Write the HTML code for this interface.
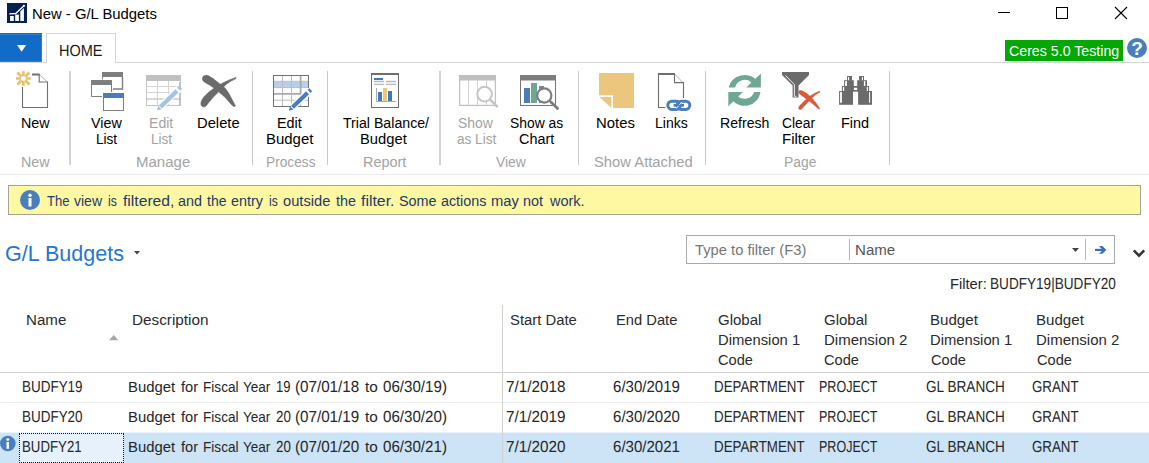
<!DOCTYPE html>
<html>
<head>
<meta charset="utf-8">
<title>New - G/L Budgets</title>
<style>
html,body{margin:0;padding:0;}
body{width:1149px;height:463px;position:relative;overflow:hidden;background:#fff;
  font-family:"Liberation Sans",sans-serif;font-size:14.5px;color:#000;}
.t{position:absolute;white-space:nowrap;line-height:18px;height:18px;transform-origin:0 0;}
.abs{position:absolute;}
.sep{position:absolute;top:71px;width:2px;height:94px;background:#d3d3d3;}
.s1{width:1px;background:#c9c9c9;}
svg{position:absolute;overflow:visible;}
</style>
</head>
<body>

<!-- ===== title bar ===== -->
<svg style="left:7px;top:3px" width="20" height="20" viewBox="0 0 20 20">
  <rect x="0" y="0" width="20" height="20" fill="#05214f"/>
  <rect x="3.1" y="13" width="3.7" height="5" fill="#fff"/>
  <rect x="8.2" y="11.6" width="3.7" height="6.4" fill="#fff"/>
  <path d="M13.3 8.4 L16.9 5 V18 H13.3 Z" fill="#fff"/>
  <path d="M2.3 10.8 L8.8 10.5 L16.9 2.7" stroke="#fff" stroke-width="1.3" fill="none" stroke-linejoin="round"/>
  <circle cx="16.9" cy="2.8" r="1.1" fill="#fff"/>
</svg>

<svg style="left:998px;top:12px" width="12" height="1"><rect width="12" height="1" fill="#000"/></svg>
<svg style="left:1056px;top:7px" width="12" height="12"><rect x="0.5" y="0.5" width="11" height="11" fill="none" stroke="#000" stroke-width="1"/></svg>
<svg style="left:1115px;top:7px" width="12" height="12"><path d="M0 0 L12 12 M12 0 L0 12" stroke="#000" stroke-width="1.1" fill="none"/></svg>

<!-- ===== tab strip ===== -->
<div class="abs" style="left:0;top:62px;width:1149px;height:1px;background:#d6d6d6;"></div>
<div class="abs" style="left:0;top:33px;width:42px;height:29px;background:#126bc6;"></div>
<div class="abs" style="left:-2px;top:34px;width:42px;height:26px;border:1px solid #2f7fd0;"></div>
<svg style="left:16.6px;top:44.7px" width="10" height="7"><path d="M0 0 L9.2 0 L4.6 6.8 Z" fill="#fff"/></svg>
<div class="abs" style="left:46px;top:33px;width:70px;height:30px;background:#fff;border:1px solid #d6d6d6;border-bottom:none;box-sizing:border-box;"></div>

<div class="abs" style="left:1005px;top:40px;width:118px;height:21px;background:#04a804;"></div>
<svg style="left:1127px;top:38px" width="20" height="20" viewBox="0 0 20 20">
  <circle cx="10" cy="10" r="10" fill="#4a7fbd"/>
  <text x="10" y="17.4" text-anchor="middle" font-family="Liberation Sans" font-weight="bold" font-size="19" fill="#fff">?</text>
</svg>

<!-- ===== ribbon ===== -->
<div class="abs" style="left:0;top:174px;width:1149px;height:1px;background:#ececec;"></div>
<div class="sep" style="left:69px;"></div>
<div class="sep s1" style="left:252px;"></div>
<div class="sep s1" style="left:327px;"></div>
<div class="sep" style="left:439px;"></div>
<div class="sep s1" style="left:578px;"></div>
<div class="sep s1" style="left:705px;"></div>
<div class="sep s1" style="left:889px;"></div>

<svg style="left:0;top:0" width="1149" height="180" viewBox="0 0 1149 180">
<!-- New -->
<g>
  <g stroke="#e8c06c" stroke-width="2.7" stroke-linecap="butt" fill="none">
    <path d="M23.4 71.2 V76.2 M23.4 80.8 V85.8 M16 78.5 H21 M25.8 78.5 H30.8"/>
    <path d="M17.4 72.5 L21.6 76.7 M25.2 80.3 L29.4 84.5 M29.4 72.5 L25.2 76.7 M21.6 80.3 L17.4 84.5"/>
  </g>
  <path d="M39.5 74.5 L47.5 82" stroke="#b4b4b4" stroke-width="1" fill="none"/>
  <path d="M22.5 87 V107.5 H47.5 V82 H39.2 V74.5" stroke="#6e6e6e" stroke-width="1.1" fill="none"/>
  <path d="M32 74.5 H39.7" stroke="#6e6e6e" stroke-width="2" fill="none"/>
</g>
<!-- View List -->
<g>
  <rect x="102" y="72" width="21" height="5" fill="#7f7f7f"/>
  <path d="M122.5 77 V89 H113" stroke="#7f7f7f" stroke-width="1.4" fill="none"/>
  <path d="M102.5 77 V79.5" stroke="#7f7f7f" stroke-width="1" fill="none"/>
  <rect x="91" y="80" width="21" height="5" fill="#7f7f7f"/>
  <path d="M111.5 85 V92 M91.5 85 V96.5 H102" stroke="#7f7f7f" stroke-width="1" fill="none"/>
  <rect x="103.5" y="93.5" width="20" height="17" fill="#fff" stroke="#7f7f7f" stroke-width="1"/>
  <rect x="103" y="93" width="21" height="5" fill="#4a7ebb"/>
</g>
<!-- Edit List (disabled) -->
<g>
  <rect x="146.5" y="75.5" width="34" height="30" fill="#fff" stroke="#c4c4c4" stroke-width="1"/>
  <rect x="146" y="75" width="35" height="6" fill="#c0c0c0"/>
  <path d="M157.5 81 V105.5 M168.5 81 V105.5 M147 86.5 H180 M147 92.5 H180" stroke="#d4d4d4" stroke-width="1" fill="none"/>
  <path d="M147 99 H180" stroke="#c8c8c8" stroke-width="1.6" fill="none"/>
  <path d="M179.8 82 V105.5" stroke="#c0c0c0" stroke-width="1.8" fill="none"/>
  <path d="M160.5 106.5 L179.5 88.5" stroke="#fff" stroke-width="7" fill="none"/>
  <path d="M160.5 106.8 L177 90.8" stroke="#a6c4e2" stroke-width="4.4" fill="none"/>
  <path d="M178.6 89.2 L180.6 87.2" stroke="#a6c4e2" stroke-width="4.4" fill="none"/>
  <path d="M157 110.5 L158.2 105.8 L161.6 109.2 Z" fill="#a6c4e2"/>
</g>
<!-- Delete -->
<g fill="#6b6b6b" stroke="#6b6b6b" stroke-width="0.6" stroke-linejoin="round">
  <path d="M202.4 78.6 C202.2 76.2 204.8 74.8 207.6 75.6 C210 76.3 213 78.4 219.5 83.6 L225 88.1 C228 91.6 230 95.4 231.3 98.1 L235.4 105.8 L234 106.8 L231.3 104.5 L225 97.2 L218.6 91.8 L214 88.1 L209.5 85 L204.6 82.2 C203 81.2 202.5 80 202.4 78.6 Z"/>
  <path d="M236 77.4 L236 78.6 L230.6 81.3 C228 82.8 226 84.6 224 86.4 L218.6 91.8 L213.2 97.3 L208.6 102.7 L206.4 105.6 C205.4 106.8 204.2 107.2 203 106.8 C201.4 106.3 200.6 104.8 201 102.7 C201.4 100.6 202.6 98.6 204 96.8 C205.4 95.2 207 93.6 208.6 92.3 L214 88.2 L222.3 83.2 L229.6 79.8 Z"/>
</g>
<!-- Edit Budget -->
<g>
  <rect x="273.5" y="75.5" width="35" height="31" fill="#fff" stroke="#717171" stroke-width="1"/>
  <rect x="274" y="81.5" width="34" height="6" fill="#b9cfe8"/>
  <path d="M282.5 76 V106 M291.5 76 V106 M274 81.3 H308 M274 87.6 H308 M274 100.2 H308" stroke="#bcbcbc" stroke-width="1" fill="none"/>
  <path d="M300.6 76 V93.8 M274 93.8 H301.4" stroke="#a9a9a9" stroke-width="1.8" fill="none"/>
  <path d="M300.6 93.8 V106" stroke="#bcbcbc" stroke-width="1" fill="none"/>
  <path d="M292 107.5 L311 90" stroke="#fff" stroke-width="6.5" fill="none"/>
  <path d="M292.5 107.2 L307.6 92.8" stroke="#4a7ebb" stroke-width="4.2" fill="none"/>
  <path d="M309 91.4 L310.8 89.7" stroke="#4a7ebb" stroke-width="4.2" fill="none"/>
  <path d="M288.8 110.8 L290 106.2 L293.4 109.6 Z" fill="#4a7ebb"/>
</g>
<!-- Trial Balance/Budget -->
<g>
  <rect x="371.5" y="73.5" width="27" height="34" fill="#fff" stroke="#6e6e6e" stroke-width="1"/>
  <rect x="371" y="73" width="28" height="2" fill="#6e6e6e"/>
  <rect x="374" y="78" width="9" height="2" fill="#3f78bd"/>
  <path d="M374 81.5 H384 M374 84.3 H384 M386 81.5 H396 M386 84.3 H396" stroke="#b9b9b9" stroke-width="1.3" fill="none"/>
  <path d="M376.5 88 V101.5 H396" stroke="#a9a9a9" stroke-width="1" fill="none"/>
  <rect x="378" y="92" width="4" height="9" fill="#3f78bd"/>
  <rect x="383" y="88" width="4" height="13" fill="#eec77d"/>
  <rect x="388" y="91" width="4" height="10" fill="#3f78bd"/>
</g>
<!-- Show as List (disabled) -->
<g>
  <rect x="459.6" y="75.6" width="35.8" height="29.8" fill="#fff" stroke="#c3c3c3" stroke-width="1.3"/>
  <rect x="459" y="75" width="37" height="5.5" fill="#c0c0c0"/>
  <path d="M468.5 80 V105.5 M477.5 80 V105.5 M486.5 80 V105.5" stroke="#d2d2d2" stroke-width="1" fill="none"/>
  <path d="M490.4 99.8 L497 106.4" stroke="#c3c3c3" stroke-width="2.6" stroke-linecap="round" fill="none"/>
  <circle cx="484.6" cy="94.1" r="7.3" fill="#fff" stroke="#c6c6c6" stroke-width="2"/>
</g>
<!-- Show as Chart -->
<g>
  <rect x="520.5" y="75.5" width="35" height="30" fill="#fff" stroke="#757575" stroke-width="1"/>
  <rect x="520" y="75" width="36" height="5.5" fill="#7d7d7d"/>
  <rect x="524" y="88" width="6" height="15" fill="#4a7ebb"/>
  <rect x="531" y="83" width="6" height="20" fill="#6fa794"/>
  <rect x="539" y="86" width="5" height="17" fill="#858585"/>
  <path d="M550.6 101.8 L557.6 108.4" stroke="#7d7d7d" stroke-width="2.8" stroke-linecap="round" fill="none"/>
  <circle cx="544.3" cy="95.5" r="7.1" fill="#fff" stroke="#7f7f7f" stroke-width="2.2"/>
</g>
<!-- Notes -->
<g>
  <rect x="599" y="73" width="35" height="35" fill="#ecc67c"/>
  <path d="M599 95.3 V108 H613 V95.3 Z" fill="#fff"/>
  <path d="M599.4 96.9 H611.4 V108 Z" fill="#ecc67c"/>
</g>
<!-- Links -->
<g>
  <path d="M674.5 74 L683.5 83" stroke="#b4b4b4" stroke-width="1" fill="none"/>
  <path d="M665.5 107.5 H658.5 V74 M683.5 98 V82.6 H674.5 V74" stroke="#6e6e6e" stroke-width="1.1" fill="none"/>
  <path d="M658 74 H675" stroke="#6e6e6e" stroke-width="2" fill="none"/>
  <g fill="none" stroke="#4a7ebb" stroke-width="3">
    <rect x="667.8" y="101.2" width="12.6" height="8.2" rx="4.1"/>
    <rect x="677.2" y="101.2" width="12.6" height="8.2" rx="4.1"/>
  </g>
  <path d="M673.6 105.3 H684" stroke="#4a7ebb" stroke-width="2.6"/>
  <path d="M676.2 108.6 L678.6 105.8 M679.4 104.8 L681.8 102" stroke="#fff" stroke-width="0.9"/>
</g>
<!-- Refresh -->
<g fill="#6fa794">
  <g>
    <path d="M728.7 87.5 A16.1 14.9 0 0 1 757.5 81 L752 83.3 A9.8 9.9 0 0 0 735.1 87.5 Z"/>
    <path d="M760.9 73.4 V87.5 H746.3 Z"/>
  </g>
  <path d="M760.5 92 A16.1 16 0 0 1 731.7 99.4 L737.2 95.7 A9.8 9 0 0 0 754.1 92 Z"/>
  <path d="M728.3 106.3 V92 H742.9 Z"/>
</g>
<!-- Clear Filter -->
<g>
  <path d="M782 72 H809 V75 L798.5 85.5 V97.6 H792.6 V85.5 L782 75 Z" fill="#6b6b6b"/>
  <path d="M785.5 75.5 L794.4 84.6 V96.3 H796.4" stroke="#fff" stroke-width="0.9" fill="none"/>
  <g fill="#d9593b" stroke="#d9593b" stroke-width="0.7" stroke-linejoin="round">
    <path d="M798.8 91.8 C799 90.4 800.6 90 802.6 91 C806 92.8 809.6 95.8 812 98.2 C815 101.6 818 105.6 819.6 108.6 L819 109.2 C816 106.4 812.6 103.4 809 100.8 C806 98.6 803 96.4 800.4 94.6 C799.2 93.8 798.6 92.8 798.8 91.8 Z"/>
    <path d="M819.6 91.2 L819.9 92 C817 93.6 814.4 95.4 812 97.8 C808.8 101 806 104 803.6 106.8 C802.4 108.4 801.4 109.4 800.2 109.4 C798.8 109.4 798.4 108.2 799 107 C799.8 105.6 800.6 104.8 801.6 103.8 C804 101.4 806.4 99 809 97 C811 95.6 813 94.2 815 93.2 Z"/>
  </g>
</g>
<!-- Find (binoculars) -->
<g fill="#6b6b6b">
  <rect x="847.1" y="76" width="4.9" height="4.6"/>
  <rect x="844.1" y="80.2" width="9.7" height="6"/>
  <rect x="841.9" y="86" width="11.9" height="5.4"/>
  <rect x="839.1" y="91" width="13.9" height="13.8"/>
  <rect x="859.1" y="76" width="4.9" height="4.6"/>
  <rect x="857.2" y="80.2" width="9.8" height="6"/>
  <rect x="857.2" y="86" width="11.9" height="5.4"/>
  <rect x="858.1" y="91" width="13.9" height="13.8"/>
  <rect x="853" y="86" width="5" height="5.6"/>
</g>
<g fill="#fff">
  <rect x="848" y="77" width="1.1" height="3.2"/>
  <rect x="845.1" y="81.1" width="1.8" height="4.9"/>
  <rect x="842.9" y="86.9" width="1.3" height="4.1"/>
  <rect x="840.1" y="92" width="1.8" height="10.8"/>
  <rect x="861.9" y="77" width="1.1" height="3.2"/>
  <rect x="863.9" y="81.1" width="1.4" height="4.9"/>
  <rect x="866.8" y="86.9" width="1.1" height="4.1"/>
  <rect x="869.1" y="92" width="1" height="10.8"/>
  <rect x="853.9" y="87.7" width="3.3" height="2.3"/>
</g>
</svg>


<!-- ===== notification bar ===== -->
<div class="abs" style="left:8px;top:185px;width:1133px;height:30px;background:#fdf8a1;border:1px solid #a3a398;box-sizing:border-box;"></div>
<svg style="left:20px;top:190px" width="20" height="20" viewBox="0 0 20 20">
  <circle cx="10" cy="10" r="10" fill="#4a7fbd"/>
  <circle cx="10" cy="5.2" r="1.7" fill="#fff"/>
  <rect x="8.5" y="8" width="3" height="8.5" fill="#fff"/>
</svg>

<!-- ===== page caption ===== -->
<svg style="left:134px;top:251px" width="6" height="4"><path d="M0 0 L6 0 L3 3.5 Z" fill="#444"/></svg>

<!-- filter box -->
<div class="abs" style="left:686px;top:235px;width:429px;height:29px;border:1px solid #a9a9a9;box-sizing:border-box;background:#fff;"></div>
<div class="abs" style="left:849px;top:239px;width:1px;height:21px;background:#b5b5b5;"></div>
<div class="abs" style="left:1085px;top:239px;width:1px;height:21px;background:#b5b5b5;"></div>
<svg style="left:1072px;top:248px" width="7" height="4"><path d="M0 0 L7 0 L3.5 4 Z" fill="#444"/></svg>
<svg style="left:1095px;top:245.2px" width="12" height="10" viewBox="0 0 12 10"><path d="M0 4.9 L9 4.9" stroke="#3473ba" stroke-width="2.2" fill="none"/><path d="M4 1 L7.4 1 L11.3 4.9 L7.4 8.8 L4 8.8 L7.7 4.9 Z" fill="#3473ba"/></svg>
<svg style="left:1133px;top:248.6px" width="12" height="9" viewBox="0 0 12 9"><path d="M0.8 1.4 L6 6.6 L11.2 1.4" stroke="#333" stroke-width="2.6" fill="none"/></svg>

<!-- ===== table ===== -->
<div class="abs" style="left:0;top:432px;width:1149px;height:31px;background:#cde4f7;"></div>
<div class="abs" style="left:0;top:432px;width:1149px;height:1px;background:#eaf3fb;"></div>
<div class="abs" style="left:19px;top:433px;width:105px;height:30px;background:#e6f1fb;border:1px dotted #111;box-sizing:border-box;"></div>
<div class="abs" style="left:0;top:372px;width:1149px;height:1px;background:#d0d0d0;"></div>
<div class="abs" style="left:0;top:402px;width:1149px;height:1px;background:#ececec;"></div>
<div class="abs" style="left:502px;top:305px;width:1px;height:158px;background:#d0d0d0;"></div>
<svg style="left:108.8px;top:334.6px" width="10" height="6"><path d="M0 5.2 L4.7 0 L9.4 5.2 Z" fill="#a6a6a6"/></svg>
<svg style="left:0.1px;top:435.2px" width="16" height="17" viewBox="0 0 16 17">
  <circle cx="7.8" cy="8.5" r="7.8" fill="#4a7fbd"/>
  <circle cx="7.8" cy="4.6" r="1.45" fill="#fff"/>
  <rect x="6.55" y="7" width="2.5" height="6.8" fill="#fff"/>
</svg>


<!-- ===== all text runs ===== -->
<div class="t" style="left:32.23px;top:4.70px;font-size:15.3px;transform:scaleX(0.9706);color:#000;">New - G/L Budgets</div>
<div class="t" style="left:59.49px;top:42.16px;font-size:16.0px;transform:scaleX(0.9066) skewX(0.05deg);color:#1a1a1a;">HOME</div>
<div class="t" style="left:1009.00px;top:41.70px;font-size:15.3px;transform:scaleX(0.9280);color:#fff;">Ceres 5.0 Testing</div>
<div class="t" style="left:20.66px;top:113.70px;font-size:15.3px;transform:scaleX(0.9360);color:#000;">New</div>
<div class="t" style="left:90.60px;top:113.70px;font-size:15.3px;transform:scaleX(0.9370);color:#000;">View</div>
<div class="t" style="left:95.71px;top:129.70px;font-size:15.3px;transform:scaleX(0.8873);color:#000;">List</div>
<div class="t" style="left:149.08px;top:113.70px;font-size:15.3px;transform:scaleX(0.9192);color:#a3a3a3;">Edit</div>
<div class="t" style="left:150.51px;top:129.70px;font-size:15.3px;transform:scaleX(0.8873);color:#a3a3a3;">List</div>
<div class="t" style="left:196.74px;top:113.70px;font-size:15.3px;transform:scaleX(0.9646);color:#000;">Delete</div>
<div class="t" style="left:277.07px;top:113.70px;font-size:15.3px;transform:scaleX(0.9346);color:#000;">Edit</div>
<div class="t" style="left:266.32px;top:129.70px;font-size:15.3px;transform:scaleX(0.9765);color:#000;">Budget</div>
<div class="t" style="left:342.60px;top:113.70px;font-size:15.3px;transform:scaleX(0.9253);color:#000;">Trial Balance/</div>
<div class="t" style="left:360.34px;top:129.70px;font-size:15.3px;transform:scaleX(0.9641);color:#000;">Budget</div>
<div class="t" style="left:458.30px;top:113.70px;font-size:15.3px;transform:scaleX(0.9103);color:#a3a3a3;">Show</div>
<div class="t" style="left:456.90px;top:129.70px;font-size:15.3px;transform:scaleX(0.8875);color:#a3a3a3;">as List</div>
<div class="t" style="left:509.70px;top:113.70px;font-size:15.3px;transform:scaleX(0.9064);color:#000;">Show as</div>
<div class="t" style="left:519.20px;top:129.70px;font-size:15.3px;transform:scaleX(0.9409);color:#000;">Chart</div>
<div class="t" style="left:596.23px;top:113.70px;font-size:15.3px;transform:scaleX(0.9717);color:#000;">Notes</div>
<div class="t" style="left:654.58px;top:113.70px;font-size:15.3px;transform:scaleX(0.9184);color:#000;">Links</div>
<div class="t" style="left:719.78px;top:113.70px;font-size:15.3px;transform:scaleX(0.9221);color:#000;">Refresh</div>
<div class="t" style="left:781.90px;top:113.70px;font-size:15.3px;transform:scaleX(0.9051);color:#000;">Clear</div>
<div class="t" style="left:782.32px;top:129.70px;font-size:15.3px;transform:scaleX(0.9788);color:#000;">Filter</div>
<div class="t" style="left:840.95px;top:113.70px;font-size:15.3px;transform:scaleX(0.9451);color:#000;">Find</div>
<div class="t" style="left:20.66px;top:152.70px;font-size:15.3px;transform:scaleX(0.9360);color:#a3a3a3;">New</div>
<div class="t" style="left:135.82px;top:152.70px;font-size:15.3px;transform:scaleX(0.9819);color:#a3a3a3;">Manage</div>
<div class="t" style="left:266.40px;top:152.70px;font-size:15.3px;transform:scaleX(0.8955);color:#a3a3a3;">Process</div>
<div class="t" style="left:363.16px;top:152.70px;font-size:15.3px;transform:scaleX(0.9439);color:#a3a3a3;">Report</div>
<div class="t" style="left:495.70px;top:152.70px;font-size:15.3px;transform:scaleX(0.9074);color:#a3a3a3;">View</div>
<div class="t" style="left:594.40px;top:152.70px;font-size:15.3px;transform:scaleX(0.9669);color:#a3a3a3;">Show Attached</div>
<div class="t" style="left:783.59px;top:152.70px;font-size:15.3px;transform:scaleX(0.9060);color:#a3a3a3;">Page</div>
<div class="t" style="left:47.00px;top:191.70px;font-size:15.3px;transform:scaleX(0.8549);color:#1f3a6a;">The</div>
<div class="t" style="left:74.10px;top:191.70px;font-size:15.3px;transform:scaleX(0.9159);color:#1f3a6a;">view</div>
<div class="t" style="left:108.00px;top:191.70px;font-size:15.3px;transform:scaleX(0.7982);color:#1f3a6a;">is</div>
<div class="t" style="left:122.60px;top:191.70px;font-size:15.3px;transform:scaleX(1.0243);color:#1f3a6a;">filtered,</div>
<div class="t" style="left:177.60px;top:191.70px;font-size:15.3px;transform:scaleX(0.9394);color:#1f3a6a;">and</div>
<div class="t" style="left:206.90px;top:191.70px;font-size:15.3px;transform:scaleX(0.9153);color:#1f3a6a;">the</div>
<div class="t" style="left:231.40px;top:191.70px;font-size:15.3px;transform:scaleX(0.9401);color:#1f3a6a;">entry</div>
<div class="t" style="left:268.71px;top:191.70px;font-size:15.3px;transform:scaleX(0.7886);color:#1f3a6a;">is</div>
<div class="t" style="left:283.00px;top:191.70px;font-size:15.3px;transform:scaleX(0.9586);color:#1f3a6a;">outside</div>
<div class="t" style="left:336.00px;top:191.70px;font-size:15.3px;transform:scaleX(0.9394);color:#1f3a6a;">the</div>
<div class="t" style="left:361.30px;top:191.70px;font-size:15.3px;transform:scaleX(1.0369);color:#1f3a6a;">filter.</div>
<div class="t" style="left:398.70px;top:191.70px;font-size:15.3px;transform:scaleX(0.9404);color:#1f3a6a;">Some</div>
<div class="t" style="left:440.60px;top:191.70px;font-size:15.3px;transform:scaleX(0.9361);color:#1f3a6a;">actions</div>
<div class="t" style="left:490.84px;top:191.70px;font-size:15.3px;transform:scaleX(0.9628);color:#1f3a6a;">may</div>
<div class="t" style="left:523.26px;top:191.70px;font-size:15.3px;transform:scaleX(0.9422);color:#1f3a6a;">not</div>
<div class="t" style="left:550.34px;top:191.70px;font-size:15.3px;transform:scaleX(0.9450);color:#1f3a6a;">work.</div>
<div class="t" style="left:4.98px;top:244.85px;font-size:21.2px;transform:scaleX(1.0182);color:#2876cc;">G/L Budgets</div>
<div class="t" style="left:695.00px;top:240.70px;font-size:15.3px;transform:scaleX(0.9635);color:#767676;">Type to filter (F3)</div>
<div class="t" style="left:855.32px;top:240.70px;font-size:15.3px;transform:scaleX(0.9848);color:#555;">Name</div>
<div class="t" style="left:949.94px;top:274.70px;font-size:15.3px;transform:scaleX(0.9613);color:#262626;">Filter:</div>
<div class="t" style="left:990.05px;top:275.16px;font-size:16.0px;transform:scaleX(0.8493) skewX(0.05deg);color:#262626;">BUDFY19|BUDFY20</div>
<div class="t" style="left:25.71px;top:310.70px;font-size:15.3px;transform:scaleX(0.9874);color:#2b2b2b;">Name</div>
<div class="t" style="left:131.70px;top:310.70px;font-size:15.3px;transform:scaleX(0.9999);color:#2b2b2b;">Description</div>
<div class="t" style="left:510.00px;top:310.70px;font-size:15.3px;transform:scaleX(0.9699);color:#2b2b2b;">Start Date</div>
<div class="t" style="left:615.74px;top:310.70px;font-size:15.3px;transform:scaleX(0.9619);color:#2b2b2b;">End Date</div>
<div class="t" style="left:718.40px;top:310.70px;font-size:15.3px;transform:scaleX(0.9813);color:#2b2b2b;">Global</div>
<div class="t" style="left:717.93px;top:330.70px;font-size:15.3px;transform:scaleX(0.9663);color:#2b2b2b;">Dimension 1</div>
<div class="t" style="left:718.40px;top:350.70px;font-size:15.3px;transform:scaleX(0.9539);color:#2b2b2b;">Code</div>
<div class="t" style="left:824.30px;top:310.70px;font-size:15.3px;transform:scaleX(0.9813);color:#2b2b2b;">Global</div>
<div class="t" style="left:823.82px;top:330.70px;font-size:15.3px;transform:scaleX(0.9807);color:#2b2b2b;">Dimension 2</div>
<div class="t" style="left:824.30px;top:350.70px;font-size:15.3px;transform:scaleX(0.9539);color:#2b2b2b;">Code</div>
<div class="t" style="left:929.61px;top:310.70px;font-size:15.3px;transform:scaleX(0.9869);color:#2b2b2b;">Budget</div>
<div class="t" style="left:930.13px;top:330.70px;font-size:15.3px;transform:scaleX(0.9663);color:#2b2b2b;">Dimension 1</div>
<div class="t" style="left:930.60px;top:350.70px;font-size:15.3px;transform:scaleX(0.9539);color:#2b2b2b;">Code</div>
<div class="t" style="left:1035.81px;top:310.70px;font-size:15.3px;transform:scaleX(0.9869);color:#2b2b2b;">Budget</div>
<div class="t" style="left:1036.32px;top:330.70px;font-size:15.3px;transform:scaleX(0.9807);color:#2b2b2b;">Dimension 2</div>
<div class="t" style="left:1036.80px;top:350.70px;font-size:15.3px;transform:scaleX(0.9539);color:#2b2b2b;">Code</div>
<div class="t" style="left:22.06px;top:378.16px;font-size:16.0px;transform:scaleX(0.8408) skewX(0.05deg);color:#262626;">BUDFY19</div>
<div class="t" style="left:506.30px;top:378.16px;font-size:16.0px;transform:scaleX(0.9538) skewX(0.05deg);color:#262626;">7/1/2018</div>
<div class="t" style="left:612.60px;top:378.16px;font-size:16.0px;transform:scaleX(0.9399) skewX(0.05deg);color:#262626;">6/30/2019</div>
<div class="t" style="left:128.13px;top:377.70px;font-size:15.3px;transform:scaleX(0.9724);color:#262626;">Budget</div>
<div class="t" style="left:180.80px;top:377.70px;font-size:15.3px;transform:scaleX(0.9573);color:#262626;">for</div>
<div class="t" style="left:202.51px;top:377.70px;font-size:15.3px;transform:scaleX(0.8898);color:#262626;">Fiscal</div>
<div class="t" style="left:243.40px;top:377.70px;font-size:15.3px;transform:scaleX(0.8860);color:#262626;">Year</div>
<div class="t" style="left:275.89px;top:378.16px;font-size:16.0px;transform:scaleX(0.8107) skewX(0.05deg);color:#262626;">19</div>
<div class="t" style="left:294.95px;top:378.16px;font-size:16.0px;transform:scaleX(0.9489) skewX(0.05deg);color:#262626;">(07/01/18</div>
<div class="t" style="left:364.70px;top:377.70px;font-size:15.3px;transform:scaleX(1.0041);color:#262626;">to</div>
<div class="t" style="left:382.50px;top:378.16px;font-size:16.0px;transform:scaleX(0.9453) skewX(0.05deg);color:#262626;">06/30/19)</div>
<div class="t" style="left:713.97px;top:378.16px;font-size:16.0px;transform:scaleX(0.8326) skewX(0.05deg);color:#262626;">DEPARTMENT</div>
<div class="t" style="left:819.22px;top:378.16px;font-size:16.0px;transform:scaleX(0.7822) skewX(0.05deg);color:#262626;">PROJECT</div>
<div class="t" style="left:925.90px;top:378.16px;font-size:16.0px;transform:scaleX(0.8502) skewX(0.05deg);color:#262626;">GL BRANCH</div>
<div class="t" style="left:1032.20px;top:378.16px;font-size:16.0px;transform:scaleX(0.8323) skewX(0.05deg);color:#262626;">GRANT</div>
<div class="t" style="left:22.06px;top:408.16px;font-size:16.0px;transform:scaleX(0.8408) skewX(0.05deg);color:#262626;">BUDFY20</div>
<div class="t" style="left:506.30px;top:408.16px;font-size:16.0px;transform:scaleX(0.9538) skewX(0.05deg);color:#262626;">7/1/2019</div>
<div class="t" style="left:612.60px;top:408.16px;font-size:16.0px;transform:scaleX(0.9399) skewX(0.05deg);color:#262626;">6/30/2020</div>
<div class="t" style="left:128.13px;top:407.70px;font-size:15.3px;transform:scaleX(0.9724);color:#262626;">Budget</div>
<div class="t" style="left:180.80px;top:407.70px;font-size:15.3px;transform:scaleX(0.9573);color:#262626;">for</div>
<div class="t" style="left:202.51px;top:407.70px;font-size:15.3px;transform:scaleX(0.8898);color:#262626;">Fiscal</div>
<div class="t" style="left:243.40px;top:407.70px;font-size:15.3px;transform:scaleX(0.8860);color:#262626;">Year</div>
<div class="t" style="left:275.70px;top:408.16px;font-size:16.0px;transform:scaleX(0.8325) skewX(0.05deg);color:#262626;">20</div>
<div class="t" style="left:294.95px;top:408.16px;font-size:16.0px;transform:scaleX(0.9489) skewX(0.05deg);color:#262626;">(07/01/19</div>
<div class="t" style="left:364.70px;top:407.70px;font-size:15.3px;transform:scaleX(1.0041);color:#262626;">to</div>
<div class="t" style="left:382.50px;top:408.16px;font-size:16.0px;transform:scaleX(0.9453) skewX(0.05deg);color:#262626;">06/30/20)</div>
<div class="t" style="left:713.97px;top:408.16px;font-size:16.0px;transform:scaleX(0.8326) skewX(0.05deg);color:#262626;">DEPARTMENT</div>
<div class="t" style="left:819.22px;top:408.16px;font-size:16.0px;transform:scaleX(0.7822) skewX(0.05deg);color:#262626;">PROJECT</div>
<div class="t" style="left:925.90px;top:408.16px;font-size:16.0px;transform:scaleX(0.8502) skewX(0.05deg);color:#262626;">GL BRANCH</div>
<div class="t" style="left:1032.20px;top:408.16px;font-size:16.0px;transform:scaleX(0.8323) skewX(0.05deg);color:#262626;">GRANT</div>
<div class="t" style="left:22.07px;top:438.16px;font-size:16.0px;transform:scaleX(0.8281) skewX(0.05deg);color:#262626;">BUDFY21</div>
<div class="t" style="left:506.30px;top:438.16px;font-size:16.0px;transform:scaleX(0.9538) skewX(0.05deg);color:#262626;">7/1/2020</div>
<div class="t" style="left:612.60px;top:438.16px;font-size:16.0px;transform:scaleX(0.9399) skewX(0.05deg);color:#262626;">6/30/2021</div>
<div class="t" style="left:128.13px;top:437.70px;font-size:15.3px;transform:scaleX(0.9724);color:#262626;">Budget</div>
<div class="t" style="left:180.80px;top:437.70px;font-size:15.3px;transform:scaleX(0.9573);color:#262626;">for</div>
<div class="t" style="left:202.51px;top:437.70px;font-size:15.3px;transform:scaleX(0.8898);color:#262626;">Fiscal</div>
<div class="t" style="left:243.40px;top:437.70px;font-size:15.3px;transform:scaleX(0.8860);color:#262626;">Year</div>
<div class="t" style="left:275.70px;top:438.16px;font-size:16.0px;transform:scaleX(0.8325) skewX(0.05deg);color:#262626;">20</div>
<div class="t" style="left:294.95px;top:438.16px;font-size:16.0px;transform:scaleX(0.9489) skewX(0.05deg);color:#262626;">(07/01/20</div>
<div class="t" style="left:364.70px;top:437.70px;font-size:15.3px;transform:scaleX(1.0041);color:#262626;">to</div>
<div class="t" style="left:382.50px;top:438.16px;font-size:16.0px;transform:scaleX(0.9453) skewX(0.05deg);color:#262626;">06/30/21)</div>
<div class="t" style="left:713.97px;top:438.16px;font-size:16.0px;transform:scaleX(0.8326) skewX(0.05deg);color:#262626;">DEPARTMENT</div>
<div class="t" style="left:819.22px;top:438.16px;font-size:16.0px;transform:scaleX(0.7822) skewX(0.05deg);color:#262626;">PROJECT</div>
<div class="t" style="left:925.90px;top:438.16px;font-size:16.0px;transform:scaleX(0.8502) skewX(0.05deg);color:#262626;">GL BRANCH</div>
<div class="t" style="left:1032.20px;top:438.16px;font-size:16.0px;transform:scaleX(0.8323) skewX(0.05deg);color:#262626;">GRANT</div>

</body>
</html>
